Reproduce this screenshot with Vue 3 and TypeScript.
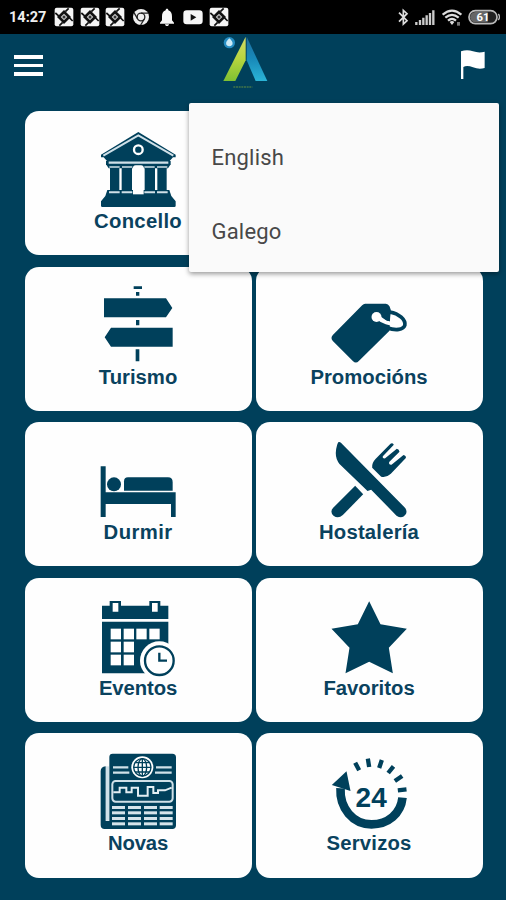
<script setup lang="ts">
interface Tile {
  id: string
  label: string
  spacing: number
  box: string
}

const tiles: Tile[] = [
  { id: 'concello', label: 'Concello', spacing: 0.3, box: '243 78 228 228' },
  { id: 'turismo', label: 'Turismo', spacing: 0, box: '243 80 228 228' },
  { id: 'promocions', label: 'Promocións', spacing: 0, box: '245.5 80 228 228' },
  { id: 'durmir', label: 'Durmir', spacing: 0.4, box: '243 82 228 228' },
  { id: 'hostaleria', label: 'Hostalería', spacing: 0.2, box: '245.5 82 228 228' },
  { id: 'eventos', label: 'Eventos', spacing: -0.1, box: '243 83 228 228' },
  { id: 'favoritos', label: 'Favoritos', spacing: 0, box: '245.5 83 228 228' },
  { id: 'novas', label: 'Novas', spacing: -0.2, box: '243 70 228 228' },
  { id: 'servizos', label: 'Servizos', spacing: 0.2, box: '245.5 70 228 228' },
]

const notifications: string[] = ['app', 'app', 'app', 'chrome', 'bell', 'video', 'app']
const languages: string[] = ['English', 'Galego']
const newsColumns: number[] = [276, 324, 372, 419]
const newsRows: number[] = [229, 245, 262, 278]
const calendarCells: number[][] = [
  [272, 175], [311, 175], [349, 175], [388, 175],
  [272, 214], [311, 214],
  [272, 253], [311, 253],
]
</script>

<template>
  <div class="screen">
    <div class="status">
      <span class="clock">14:27</span>
      <div class="notes">
        <span v-for="(n, i) in notifications" :key="i" class="slot">
          <svg v-if="n === 'app'" viewBox="0 0 60 60">
            <rect x="2" y="2" width="56" height="56" rx="6" fill="#f4f4f4" />
            <path d="M30 9 51 30 30 51 9 30Z" fill="#111" />
            <path d="M4 18 20 32M56 42 42 28M44 4 34 14M16 56 26 46" stroke="#111" stroke-width="5" />
            <path d="M30 20 40 30 30 40 20 30Z" fill="#ccc" />
            <circle cx="30" cy="30" r="4.5" fill="#333" />
          </svg>
          <svg v-else-if="n === 'chrome'" viewBox="0 0 60 60">
            <circle cx="30" cy="30" r="24" fill="#eee" />
            <circle cx="30" cy="30" r="11.500" fill="none" stroke="#222" stroke-width="4" />
            <path d="M30 18.500H52M20 36 9 17M40 36 29 54" stroke="#222" stroke-width="4" />
          </svg>
          <svg v-else-if="n === 'bell'" viewBox="0 0 60 60">
            <path d="M30 5c3 0 4 2 4 5 9 3 11 10 11 19v11l6 7v3H9v-3l6-7V29c0-9 2-16 11-19 0-3 1-5 4-5ZM24 52h12c0 7-12 7-12 0Z" fill="#f6f6f6" />
          </svg>
          <svg v-else viewBox="0 0 60 60">
            <rect x="1" y="10" width="58" height="42" rx="10" fill="#f6f6f6" />
            <path d="M23 21 40 31 23 41Z" fill="#111" />
          </svg>
        </span>
      </div>
      <div class="system">
        <svg class="bt" viewBox="437 24 32 54">
          <path d="M440 38 464 62 453 72V31L464 41 440 65" fill="none" stroke="#ddd" stroke-width="5" />
        </svg>
        <svg class="signal" viewBox="487 24 60 54">
          <path d="M491 66V75M502 60V75M512 53V75M522 46V75M532 39V75M542 31V75" stroke="#ccc" stroke-width="7" />
        </svg>
        <svg class="wifi" viewBox="566 24 60 54">
          <g fill="none" stroke="#ddd" stroke-width="6.500">
            <path d="M568 44Q596 20 624 44" />
            <path d="M576 53Q596 36 616 53" />
            <path d="M584 62Q596 51 608 62" />
          </g>
          <path d="M589 66Q596 60 603 66L596 75Z" fill="#ddd" />
          <path d="M611 77V66H620V77Z" fill="#777" />
        </svg>
        <svg class="battery" viewBox="645 24 96 54">
          <rect x="648" y="32" width="84" height="39" rx="19" fill="#222" stroke="#bbb" stroke-width="5" />
          <path d="M667 36H704V67H667A15.500 15.500 0 0 1 667 36Z" fill="#666" />
          <path d="M736 42Q743 51 736 60" fill="none" stroke="#bbb" stroke-width="4" />
          <text x="690" y="64" class="charge">61</text>
        </svg>
      </div>
    </div>

    <header class="bar">
      <div class="burger"><i /><i /><i /></div>
      <svg class="logo" viewBox="669 108 135 160">
        <defs>
          <linearGradient id="leaf" x1="0" y1="0" x2="0" y2="1">
            <stop offset="0" stop-color="#d3dc68" />
            <stop offset="0.5" stop-color="#b7d53f" />
            <stop offset="1" stop-color="#7fc032" />
          </linearGradient>
          <linearGradient id="water" x1="0" y1="0" x2="0" y2="1">
            <stop offset="0" stop-color="#1d6d9e" />
            <stop offset="0.5" stop-color="#1889b9" />
            <stop offset="1" stop-color="#2bb4d6" />
          </linearGradient>
        </defs>
        <path d="M737 110V181L706 243H670Z" fill="url(#leaf)" />
        <path d="M740 110 802 243H767L740 181Z" fill="url(#water)" />
        <circle cx="688" cy="128" r="17" fill="#268dc2" />
        <path d="M688 115C697 124 699 128 697 134Q688 144 679 134C677 128 679 124 688 115Z" fill="#cdeaf5" />
        <path d="M700 261H757" stroke="#5d8a43" stroke-width="5" stroke-dasharray="6 2" opacity="0.7" />
      </svg>
      <svg class="flag" viewBox="625 151 72 88">
        <path d="M625 155Q643 149 661 155T696 156V205Q679 210 661 203T632 202V238H625Z" fill="#fff" />
      </svg>
    </header>

    <main class="tiles">
      <section v-for="t in tiles" :key="t.id" class="tile" :class="t.id">
        <svg class="icon" :viewBox="t.box">
          <g v-if="t.id === 'concello'">
            <path d="M355 81 467 149V157H459L449 168H261L251 157H243V149Z" />
            <path d="M250 152 355 91 460 152" fill="none" stroke="#cfe0e8" stroke-width="6" />
            <circle cx="355" cy="134" r="13" fill="none" stroke="#fff" stroke-width="7" />
            <path d="M258 168H452V178L444 190H266L258 178Z" />
            <path d="M266 173H445" stroke="#cfe0e8" stroke-width="7" />
            <path d="M270 188H298V260H270ZM305 188H336V260H305ZM374 188H405V260H374ZM412 188H440V260H412Z" />
            <path d="M268 186H299M306 186H337M373 186H404M411 186H442" stroke="#cfe0e8" stroke-width="5" />
            <path d="M338 192Q338 181 347 181H363Q372 181 372 192V262H338Z" fill="#fff" />
            <path d="M262 255H448L454 273 467 289V302Q467 306 463 306H247Q243 306 243 302V289L256 273Z" />
            <path d="M267 262H299M305 262H337M373 262H405M411 262H443" stroke="#cfe0e8" stroke-width="6" />
            <path d="M339 251H371V268H339Z" fill="#fff" />
          </g>
          <g v-else-if="t.id === 'turismo'">
            <path d="M341 78H366V86H341ZM348 95H358V106H348ZM348 179H358V195H348ZM347 267H358V303H347Z" />
            <path d="M252 114H438L457 143 438 171H252ZM458 202H273L254 231 273 259H458Z" />
          </g>
          <g v-else-if="t.id === 'promocions'">
            <path d="M345 130H407Q414 130 418 138L422 149 418 211 326 302Q317 311 308 302L248 242Q240 233 248 224L336 135Q340 130 345 130Z" />
            <path d="M419 155C447 160 467 178 464 195 460 208 437 212 411 202" fill="none" stroke="#00405b" stroke-width="11" />
            <path d="M381 178Q408 199 446 196 460 190 446 177L422 164 419 183Q410 183 402 176L388 166Z" fill="#fff" />
            <path d="M397 158H419V183Q406 181 397 168Z" />
            <circle cx="379" cy="170" r="15" fill="#fff" />
          </g>
          <g v-else-if="t.id === 'durmir'">
            <path d="M242 155H257V233H467V307H453V268H257V307H242Z" />
            <circle cx="282" cy="209" r="21" />
            <path d="M312 228V200Q312 188 324 188H444Q458 188 458 202V228Z" />
          </g>
          <g v-else-if="t.id === 'hostaleria'">
            <path d="M264 83Q268 80 273 85L463 278Q474 290 465 301 455 313 439 303L363 225 352 229 268 148Q250 126 261 90Z" />
            <path d="M315 213 339 239 278 301Q264 314 250 303 238 292 249 279Z" />
            <path d="M421 87Q427 84 431 90L398 125Q396 132 405 131L440 102Q447 104 448 111L417 142Q415 151 424 150L460 121Q469 124 467 130L422 177Q408 190 393 186L366 159Q364 146 376 133Z" />
          </g>
          <g v-else-if="t.id === 'eventos'">
            <path d="M246 106H269V92H303V106H388V92H421V106H445V146H246ZM246 154H445V309H246Z" />
            <path d="M278 98H295V124H278ZM396 98H413V124H396Z" fill="#fff" />
            <rect v-for="(c, i) in calendarCells" :key="i" :x="c[0]" :y="c[1]" width="31" height="32" fill="#fff" />
            <circle cx="418" cy="271" r="58" fill="#fff" />
            <circle cx="418" cy="271" r="43" fill="none" stroke="#00405b" stroke-width="7" />
            <path d="M418 247V271H441" fill="none" stroke="#00405b" stroke-width="7" />
          </g>
          <g v-else-if="t.id === 'favoritos'">
            <path d="M357 93 391 162 470 175 416 232 428 309 357 274 286 309 298 232 244 175 323 162Z" />
          </g>
          <g v-else-if="t.id === 'novas'">
            <path d="M278 72H457Q468 72 468 83V287Q468 298 457 298H254Q242 298 242 286V124Q242 112 257 110V274H268V82Q268 72 278 72Z" />
            <path d="M258 110H267V273H258Z" fill="#cfe0e8" />
            <path d="M279 113H325M279 129H328M408 113H455M405 129H455" stroke="#cfe0e8" stroke-width="7" />
            <circle cx="367" cy="113" r="33" fill="#fff" />
            <g fill="none" stroke="#00405b" stroke-width="4">
              <circle cx="367" cy="113" r="26" />
              <ellipse cx="367" cy="113" rx="13" ry="26" />
              <path d="M367 87V139M341 113H393M346 99H388M346 127H388" />
            </g>
            <rect x="277" y="154" width="181" height="62" rx="10" fill="none" stroke="#cfe0e8" stroke-width="6" />
            <path d="M280 188H299V174H319V188H335V174H354V198H383V172H400V190H414V182H435L455 174" fill="none" stroke="#e3eef3" stroke-width="6" />
            <template v-for="y in newsRows" :key="y">
              <rect v-for="x in newsColumns" :key="x" :x="x" :y="y" width="39" height="9" fill="#d5e4eb" />
            </template>
          </g>
          <g v-else>
            <path d="M271 176C268 235 308 284 364 284 414 284 452 252 457 204" fill="none" stroke="#00405b" stroke-width="26" />
            <path d="M289 125 301 184 245 166Z" />
            <path d="M315 99 327 122M353 87 357 112M395 91 387 115M430 110 414 130M456 139 434 154M469 179 443 182" stroke="#00405b" stroke-width="13" />
            <text x="363" y="231" class="hours">24</text>
          </g>
        </svg>
        <span class="label" :style="{ letterSpacing: t.spacing + 'px' }">{{ t.label }}</span>
      </section>
    </main>

    <div class="menu">
      <div v-for="l in languages" :key="l" class="option">{{ l }}</div>
    </div>
  </div>
</template>

<style>
body {
  margin: 0;
  background: #00405b;
}
</style>

<style scoped>
.screen {
  position: relative;
  width: 506px;
  height: 900px;
  overflow: hidden;
  background: #00405b;
  font-family: Roboto, "Liberation Sans", sans-serif;
}
.status {
  display: flex;
  align-items: center;
  box-sizing: border-box;
  height: 34px;
  padding: 0 6px 0 9px;
  background: #000;
}
.clock {
  width: 42px;
  color: #eee;
  font-size: 14.500px;
  font-weight: 700;
  line-height: 34px;
  padding-top: 1px;
}
.notes {
  display: flex;
}
.slot {
  display: flex;
  justify-content: center;
  width: 25.8px;
}
.slot svg {
  width: 20px;
  height: 20px;
}
.system {
  display: flex;
  align-items: center;
  gap: 6.3px;
  margin-left: auto;
}
.system svg {
  height: 18px;
}
.bt {
  width: 10.7px;
}
.signal,
.wifi {
  width: 20px;
}
.battery {
  width: 32px;
}
.charge {
  fill: #fff;
  font: 700 34px Roboto, sans-serif;
  text-anchor: middle;
}
.bar {
  display: flex;
  align-items: center;
  height: 62px;
  padding: 0 21px 0 14.300px;
}
.burger {
  display: flex;
  flex-direction: column;
  gap: 5px;
  width: 28.700px;
  padding-top: 1px;
}
.burger i {
  height: 3.7px;
  background: #fff;
}
.logo {
  width: 45px;
  height: 53.300px;
  margin: -4px 0 0 180px;
}
.flag {
  width: 24px;
  height: 29.300px;
  margin-left: auto;
}
.tiles {
  display: grid;
  grid-template-columns: 227px 227px;
  grid-auto-rows: 144.300px;
  gap: 11.300px 4px;
  padding: 15px 0 0 25.300px;
}
.tile {
  display: flex;
  flex-direction: column;
  align-items: center;
  box-sizing: border-box;
  padding-top: 20px;
  border-radius: 14px;
  background: #fefefe;
  color: #0a425e;
}
.turismo {
  grid-column-start: 1;
}
.icon {
  flex: none;
  width: 76px;
  height: 76px;
  overflow: visible;
  fill: #00405b;
}
.label {
  margin-top: 2px;
  padding-right: 1.500px;
  font: 700 20.300px/24px "Liberation Sans", Arial, sans-serif;
}
.hours {
  font: 700 84px "Liberation Sans", Arial, sans-serif;
  text-anchor: middle;
}
.menu {
  position: absolute;
  top: 103px;
  left: 188.500px;
  box-sizing: border-box;
  width: 310px;
  height: 169px;
  padding-top: 18px;
  border-radius: 2px;
  background: #fafafa;
  box-shadow: 0 2px 5px rgba(0, 0, 0, 0.4);
}
.option {
  height: 74.300px;
  padding-left: 23px;
  color: #484848;
  font-size: 22px;
  line-height: 74px;
  letter-spacing: 0.2px;
}
</style>
